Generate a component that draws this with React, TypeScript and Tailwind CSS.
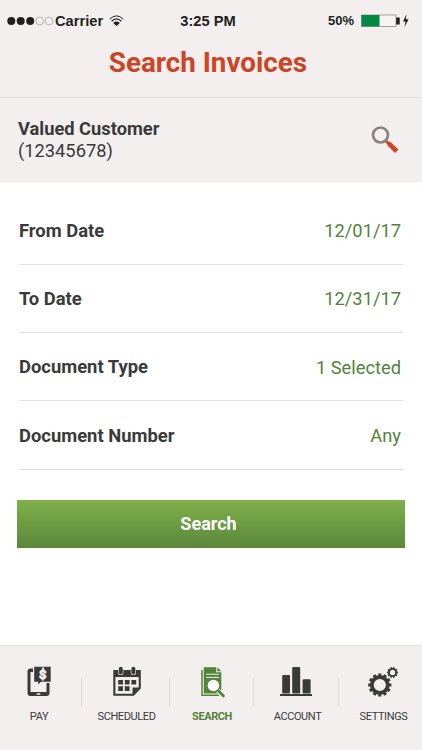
import React from 'react';
import { clsx } from 'clsx';

const filters = [
  { label: 'From Date', value: '12/01/17' },
  { label: 'To Date', value: '12/31/17' },
  { label: 'Document Type', value: '1 Selected' },
  { label: 'Document Number', value: 'Any' },
];

const PayIcon = () => (
  <svg width="32" height="32" viewBox="0 0 32 32" fill="currentColor">
    <path d="M7 2.5H4.5A3 3 0 0 0 1.5 5.5V27a3 3 0 0 0 3 3h16a3 3 0 0 0 3-3V17h-3v9H4.500V6H7z" />
    <path d="M8.200.700H24.700V15.700H15L12.200 18.600V15.700H8.200z" />
    <rect x="10.500" y="27.200" width="4" height="1.600" rx=".7" fill="#f3efee" />
    <text
      x="16.400"
      y="12.800"
      textAnchor="middle"
      fill="#f3efee"
      stroke="#f3efee"
      strokeWidth=".8"
      fontSize="12.800"
      fontWeight="900"
      fontFamily="Roboto, sans-serif"
    >
      $
    </text>
  </svg>
);

const CalendarIcon = () => (
  <svg width="32" height="32" viewBox="0 0 32 32" fill="currentColor">
    <path fillRule="evenodd" d="M2.300 4H29.800V22.500L22.800 29.800H2.300zM4.400 11V27.700H21.500V21.500H27.700V11z" />
    <rect x="7.200" y=".2" width="5.200" height="8.800" rx="2.600" fill="#f3efee" />
    <rect x="19.800" y=".2" width="5.200" height="8.800" rx="2.600" fill="#f3efee" />
    <rect x="7.800" y=".8" width="4" height="7.600" rx="2" />
    <rect x="20.400" y=".8" width="4" height="7.600" rx="2" />
    <path d="M7.200 14h4.800v4.600H7.200zM13.800 14h4.800v4.600h-4.800zM20.400 14h4.800v4.600h-4.800zM7.200 20.300h4.800v4.600H7.200zM13.800 20.300h4.800v4.600h-4.800z" />
  </svg>
);

const DocumentSearchIcon = () => (
  <svg width="32" height="32" viewBox="0 0 32 32" fill="currentColor">
    <path d="M6 4v25.200h17" fill="none" stroke="currentColor" strokeWidth="1.500" />
    <path d="M7.800 1.200H20.200V6.200H25.300V27.600H7.800z" />
    <path d="M21.300 1.200L25.300 5.200H21.300z" />
    <path d="M10 8.200h13M10 11.400h13" stroke="#f3efee" strokeWidth="1" />
    <path d="M21.500 24.200l6 6" stroke="#f3efee" strokeWidth="4.500" />
    <path d="M21 23.500l6.500 6.500" stroke="currentColor" strokeWidth="2.600" strokeLinecap="round" />
    <circle cx="17.400" cy="19.500" r="7" />
    <circle cx="17.400" cy="19.500" r="5.800" fill="#fff" />
  </svg>
);

const ChartIcon = () => (
  <svg width="32" height="32" viewBox="0 0 32 32" fill="currentColor">
    <rect x="2.200" y="9" width="7.800" height="18.600" rx="1" />
    <rect x="12.200" y="1" width="8" height="26.600" rx="1" />
    <rect x="22.600" y="13.300" width="8" height="14.300" rx="1" />
    <rect x="0" y="28" width="32" height="2" />
  </svg>
);

const GearIcon = () => (
  <svg width="32" height="32" viewBox="0 0 32 32" fill="none" stroke="currentColor">
    <circle cx="12.800" cy="19" r="8" strokeWidth="3.800" />
    <circle cx="12.800" cy="19" r="10.300" strokeWidth="2.600" pathLength="24" strokeDasharray="1.150 .85" strokeDashoffset=".575" />
    <circle cx="25.500" cy="6.500" r="3.600" strokeWidth="1.900" />
    <circle cx="25.500" cy="6.500" r="4.700" strokeWidth="1.500" pathLength="20" strokeDasharray="1.150 .85" strokeDashoffset=".575" />
  </svg>
);

const tabs = [
  { label: 'PAY', icon: PayIcon, cell: 'w-[82px] pr-[4px]', shift: 'ml-[6px]' },
  { label: 'SCHEDULED', icon: CalendarIcon, cell: 'w-[88px] pl-px', shift: 'ml-px' },
  { label: 'SEARCH', icon: DocumentSearchIcon, cell: 'w-[84px]', shift: '-ml-px' },
  { label: 'ACCOUNT', icon: ChartIcon, cell: 'w-[85px] pl-[2px]', shift: '-ml-[3px]' },
  { label: 'SETTINGS', icon: GearIcon, cell: 'w-[84px] pl-[5px]', shift: '-ml-px' },
];

const StatusBar = () => (
  <div className="flex h-[42px] items-center px-[7px] font-['Liberation_Sans',sans-serif] text-[14.700px] font-bold text-[#231f20]">
    <div className="flex w-[137px] items-center">
      <svg width="47" height="10" viewBox="0 0 47 10" fill="#231f20">
        <circle cx="4.300" cy="5" r="4" />
        <circle cx="13.700" cy="5" r="4" />
        <circle cx="23.200" cy="5" r="4" />
        <circle cx="32.600" cy="5" r="3.900" fill="none" stroke="#888" strokeWidth=".6" />
        <circle cx="42" cy="5" r="3.900" fill="none" stroke="#888" strokeWidth=".6" />
      </svg>
      <span className="ml-[1px] whitespace-nowrap">Carrier</span>
      <svg className="ml-[6px]" width="15" height="12" viewBox="0 0 15 12" fill="none" stroke="#231f20">
        <path d="M.7 4.200Q7.500-2.500 14.300 4.200" strokeWidth="1" />
        <path d="M2.600 6.300Q7.500 1.500 12.400 6.300" strokeWidth="1.200" />
        <path d="M7.500 11L4.200 7.900Q7.500 5.200 10.800 7.900z" fill="#231f20" stroke="none" />
      </svg>
    </div>
    <div className="flex-1 text-center">3:25 PM</div>
    <div className="flex w-[143px] items-center justify-end">
      <span className="text-[13px]">50%</span>
      <svg className="ml-[7px]" width="54" height="14" viewBox="0 0 54 14">
        <rect x=".5" y="1" width="34.500" height="11.500" fill="#f7f5f4" stroke="#8d8d8d" strokeWidth=".8" />
        <rect x=".5" y="1" width="18" height="11.500" fill="#058743" />
        <rect x="35.200" y="3.500" width="3.500" height="7" fill="#231f20" />
        <path d="M45.500 0L42 7.500H44.600L43.500 13L47.600 5.200H44.800z" fill="#231f20" />
      </svg>
    </div>
  </div>
);

const App: React.FC = () => (
  <div className="flex h-[750px] w-[422px] flex-col overflow-hidden bg-white font-['Roboto',sans-serif] text-[#3a3a3a]">
    {/* Header */}
    <header className="h-[98px] border-b border-[#e2dfde] bg-[#f3efee]">
      <StatusBar />
      <h1 className="pr-[6px] text-center text-[27.800px] leading-[42px] font-bold text-[#cb4527]">Search Invoices</h1>
    </header>

    {/* Customer */}
    <section className="flex h-[84px] items-center justify-between border-b border-[#ebe9e8] bg-[#f3efee] pt-px pr-[22px] pl-[18px]">
      <div className="text-[18.300px] leading-[22px]">
        <div className="font-bold">Valued Customer</div>
        <div>(12345678)</div>
      </div>
      <svg width="30" height="30" viewBox="0 0 30 30" fill="none">
        <path d="M16 16L20 20" stroke="#cf4526" strokeWidth="3" />
        <path d="M18 17L20.500 17L28.500 24.500L25 28L17.500 20.500V18z" fill="#cf4526" />
        <circle cx="10.500" cy="10" r="7.500" stroke="#858383" strokeWidth="2.700" />
      </svg>
    </section>

    {/* Filters */}
    <main className="flex-1 pt-[14.500px]">
      <div className="mx-[19px]">
        {filters.map((filter) => (
          <div
            key={filter.label}
            className="flex h-[68.300px] items-center justify-between border-b border-[#e2e2e2] pt-[1px] text-[18.400px]"
          >
            <span className="font-bold">{filter.label}</span>
            <span className="pr-[2px] text-[18.300px] text-[#53833a]">{filter.value}</span>
          </div>
        ))}
      </div>
      <button
        type="button"
        className="mt-[30.300px] ml-[17px] block h-[48px] w-[388px] bg-linear-to-b from-[#7fb04a] to-[#5b873b] pr-[5px] text-[18px] font-bold text-white"
      >
        Search
      </button>
    </main>

    {/* Tab bar */}
    <nav className="flex h-[105px] border-t border-[#e2dfde] bg-[#f3efee] pt-[20px]">
      {tabs.map(({ label, icon: Icon, cell, shift }, idx) => (
        <div key={label} className={clsx('flex', idx > 0 && '-ml-px')}>
          {idx > 0 && <div className="mt-[12px] h-[29px] w-px bg-[#dcd9d8]" />}
          <div
            className={clsx(
              'flex flex-col items-center text-[11px] tracking-[-0.4px]',
              cell,
              label === 'SEARCH' ? 'font-bold text-[#53833a]' : 'text-[#3a3a3a]'
            )}
          >
            <span className={shift}>
              <Icon />
            </span>
            <span className="mt-[11px] leading-[16px]">{label}</span>
          </div>
        </div>
      ))}
    </nav>
  </div>
);

export default App;
